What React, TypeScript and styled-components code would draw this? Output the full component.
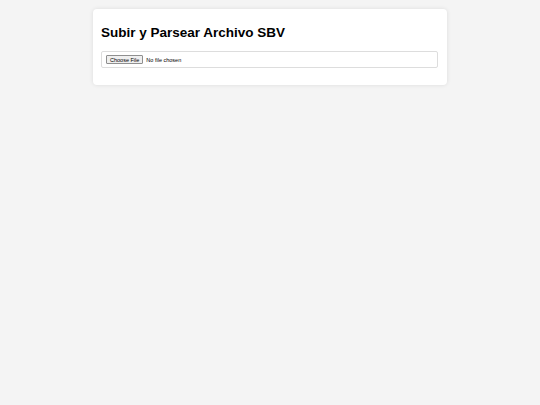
import React from "react";
import styled, { createGlobalStyle } from "styled-components";

const Global = createGlobalStyle`
  html, body {
    margin: 0;
    padding: 0;
    background: #f4f4f4;
    font-family: "Liberation Sans", Arial, sans-serif;
  }
  body { min-height: 405px; }
`;

const Page = styled.div`
  display: flex;
  justify-content: center;
  padding-top: 9px;
`;

const Card = styled.div`
  width: 354px;
  box-sizing: border-box;
  background: #ffffff;
  border-radius: 4px;
  box-shadow: 0 0 4px rgba(0, 0, 0, 0.1);
  padding: 16px 9px 17px 8px;
`;

const Title = styled.h1`
  margin: 0 0 10px 0;
  font-size: 13.5px;
  line-height: 16px;
  font-weight: bold;
  color: #000;
`;

const FileBox = styled.div`
  border: 1px solid #ddd;
  border-radius: 2px;
  height: 17px;
  box-sizing: border-box;
  display: flex;
  align-items: center;
  padding-left: 4px;
`;

const FileInput = styled.input`
  font-family: "Liberation Sans", Arial, sans-serif;
  font-size: 5.5px;
  color: #000;

  &::file-selector-button {
    font-family: "Liberation Sans", Arial, sans-serif;
    font-size: 5.5px;
    height: 9px;
    padding: 0 3px;
    margin-right: 3px;
    border: 1px solid #8f8f8f;
    border-radius: 1px;
    background: #efefef;
    color: #000;
  }
`;

export default function App() {
  return (
    <>
      <Global />
      <Page>
        <Card>
          <Title>Subir y Parsear Archivo SBV</Title>
          <FileBox>
            <FileInput type="file" accept=".sbv" />
          </FileBox>
        </Card>
      </Page>
    </>
  );
}
